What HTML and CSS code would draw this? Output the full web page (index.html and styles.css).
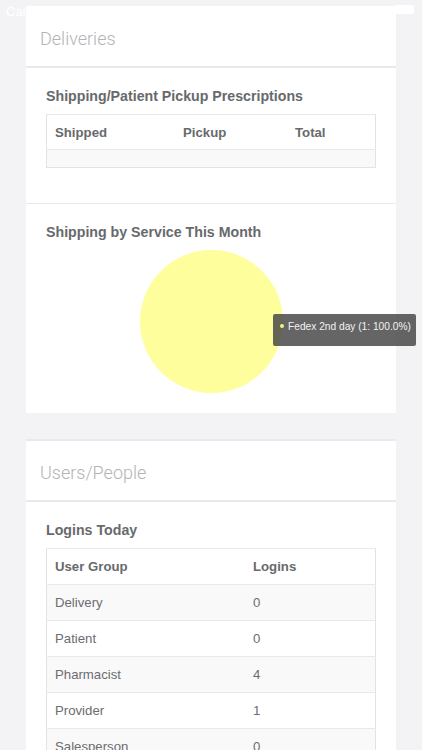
FILE: index.html
```html
<!DOCTYPE html>
<html>
<head>
<meta charset="utf-8">
<link rel="stylesheet" href="styles.css">
</head>
<body>
<div class="statusbar"><span class="carrier">Carrier</span><span class="battery"></span></div>
<div class="page">
  <div class="card">
    <div class="card-title">Deliveries</div>
    <div class="section">
      <h3>Shipping/Patient Pickup Prescriptions</h3>
      <table class="grid grid-3">
        <thead><tr><th class="c1">Shipped</th><th class="c2">Pickup</th><th>Total</th></tr></thead>
        <tbody><tr class="empty"><td colspan="3"></td></tr></tbody>
      </table>
    </div>
    <div class="section section-chart">
      <h3>Shipping by Service This Month</h3>
      <div class="chart">
        <div class="pie"></div>
        <div class="tooltip"><span class="dot"></span>Fedex 2nd day (1: 100.0%)</div>
      </div>
    </div>
  </div>
  <div class="card card-second">
    <div class="card-title">Users/People</div>
    <div class="section">
      <h3>Logins Today</h3>
      <table class="grid grid-2">
        <thead><tr><th class="g1">User Group</th><th>Logins</th></tr></thead>
        <tbody>
          <tr><td>Delivery</td><td>0</td></tr>
          <tr><td>Patient</td><td>0</td></tr>
          <tr><td>Pharmacist</td><td>4</td></tr>
          <tr><td>Provider</td><td>1</td></tr>
          <tr><td>Salesperson</td><td>0</td></tr>
        </tbody>
      </table>
    </div>
  </div>
</div>
</body>
</html>
```
FILE: styles.css
```css
html, body { margin: 0; padding: 0; }
body {
  background: #f3f3f5;
  font-family: "Liberation Sans", Arial, sans-serif;
  color: #676a6c;
  width: 422px;
  height: 750px;
  overflow: hidden;
  position: relative;
}
.statusbar {
  position: absolute;
  top: 0; left: 0; right: 0;
  height: 20px;
  z-index: 0;
}
.carrier {
  position: absolute;
  left: 6px; top: 4px;
  color: #ffffff;
  font-size: 13px;
}
.battery {
  position: absolute;
  left: 394px; top: 5px;
  width: 20px; height: 9px;
  background: #ffffff;
  border-radius: 2px;
}
.page {
  position: relative;
  z-index: 1;
  padding: 6px 26px 0;
}
.card {
  background: #ffffff;
  margin-bottom: 26px;
}
.card-second {
  border-top: 2px solid #e7eaec;
}
.card-title {
  height: 62px;
  display: flex;
  align-items: center;
  padding-left: 14px;
  padding-top: 4px;
  box-sizing: border-box;
  font-family: Roboto, "Liberation Sans", sans-serif;
  font-weight: 300;
  font-size: 18px;
  color: #b3b3b6;
  border-bottom: 2px solid #e7eaec;
}
.card-second .card-title { height: 61px; }
.section {
  padding: 19px 20px 35px;
}
.section + .section {
  border-top: 1px solid #e7eaec;
}
h3 {
  margin: 0 0 9px;
  font-size: 14.2px;
  line-height: 18px;
  font-weight: bold;
  color: #676a6c;
}
.grid {
  width: 100%;
  border-collapse: collapse;
  border: 1px solid #e2e3e5;
  font-size: 13.2px;
}
.grid th, .grid td {
  text-align: left;
  padding: 8px 8px;
  line-height: 19px;
  border-top: 1px solid #e7eaec;
}
.grid th {
  font-weight: bold;
  color: #676a6c;
}
.grid-3 th { padding-bottom: 7px; }
.grid td { color: #6b6d70; }
.grid-3 .c1 { width: 112px; }
.grid-3 .c2 { width: 96px; }
.grid-2 .g1 { width: 182px; }
.grid tbody tr:nth-child(odd) { background: #f9f9f9; }
.empty td { height: 18px; padding: 0; box-sizing: border-box; }
.section-chart { padding-bottom: 21px; }
.chart {
  position: relative;
  height: 142px;
  display: flex;
  justify-content: center;
  align-items: center;
}
.pie {
  width: 143px; height: 143px;
  flex-shrink: 0;
  border-radius: 50%;
  background: #fefe9d;
}
.tooltip {
  position: absolute;
  left: 227px;
  top: 64px;
  width: 143px;
  height: 32px;
  box-sizing: border-box;
  padding: 7px 0 0 7px;
  background: rgba(72, 72, 72, 0.84);
  border-radius: 2px;
  color: #f2f2f2;
  font-size: 10.2px;
  line-height: 12px;
  white-space: nowrap;
}
.dot {
  display: inline-block;
  width: 4px; height: 4px;
  border-radius: 50%;
  background: #f4f47a;
  margin-right: 4px;
  vertical-align: 2px;
}
```
